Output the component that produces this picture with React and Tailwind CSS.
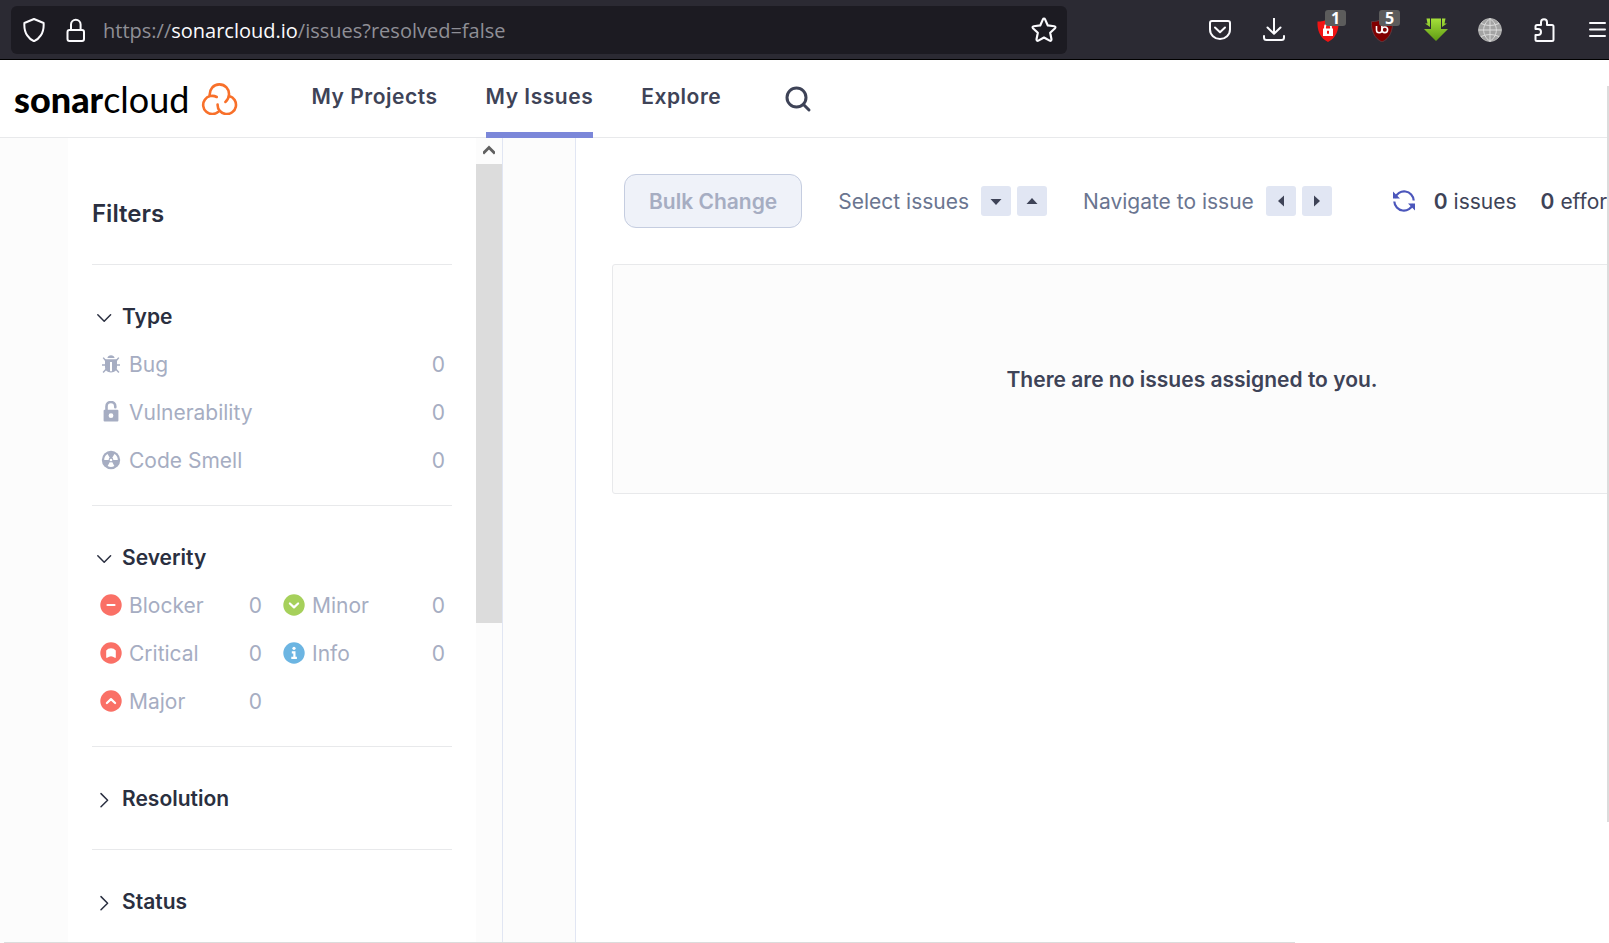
import React from "react";

const facets = {
  severity: [
    ["Blocker", "blocker"], ["Minor", "minor"],
    ["Critical", "critical"], ["Info", "info"],
    ["Major", "major"],
  ],
  type: [["Bug", "bug"], ["Vulnerability", "lock"], ["Code Smell", "smell"]],
};

function FacetIcon({ kind }) {
  const shapes = {
    bug: (
      <g>
        <path fill="#a6adc2" d="M7.4 5a3.7 3.7 0 0 1 7.2 0z" />
        <path fill="#a6adc2" fillRule="evenodd" d="M5 6.200h12v7.600c0 3.600-2.200 5.600-6 5.600s-6-2-6-5.600zM10 9v9.200h2V9z" />
        <path stroke="#a6adc2" strokeWidth="1.500" fill="none" d="M5.800 7.800L3.200 4.600M16.200 7.800l2.600-3.200M5.800 12H2M16.200 12H20M6.300 16l-3.200 3.400M15.700 16l3.200 3.400" />
      </g>
    ),
    lock: (
      <g>
        <path stroke="#a6adc2" strokeWidth="2.600" strokeLinecap="round" fill="none" d="M6.500 10V5.400a4.400 4.400 0 0 1 8.800 0v.8" />
        <path fill="#a6adc2" fillRule="evenodd" d="M4.600 8.800h12.800a1 1 0 0 1 1 1v9.600a1 1 0 0 1-1 1H4.600a1 1 0 0 1-1-1V9.800a1 1 0 0 1 1-1zM11 12.300a2.400 2.400 0 1 0 0 4.800 2.400 2.400 0 0 0 0-4.800z" />
      </g>
    ),
    smell: (
      <g>
        <circle cx="11" cy="11" r="9.200" fill="#a6adc2" />
        <path fill="#fff" d="M11 11L4.200 11a6.800 6.800 0 0 1 3.400-5.900zM11 11l3.400-5.900a6.800 6.800 0 0 1 3.400 5.900zM11 11l3.400 5.900a6.800 6.800 0 0 1-6.800 0z" />
        <circle cx="11" cy="11" r="2.400" fill="#a6adc2" />
        <circle cx="11" cy="11" r="1.300" fill="#fff" />
      </g>
    ),
    blocker: (
      <g>
        <circle cx="11" cy="11" r="10.7" fill="#fa7066" />
        <path stroke="#fff" strokeWidth="2.2" strokeLinecap="round" d="M7.5 11h7" />
      </g>
    ),
    critical: (
      <g>
        <circle cx="11" cy="11" r="10.7" fill="#fa7066" />
        <path fill="#fff" d="M6.200 8.600Q8 6.300 11 6.300t4.800 2.300v6.600c0 .6-.5.9-1 .6Q13 14.300 11 14.300t-3.800 1.500c-.5.3-1 0-1-.6z" />
      </g>
    ),
    major: (
      <g>
        <circle cx="11" cy="11" r="10.7" fill="#fa7066" />
        <path stroke="#fff" strokeWidth="2.2" strokeLinecap="round" strokeLinejoin="round" fill="none" d="M6.900 13L11 9.100 15.100 13" />
      </g>
    ),
    minor: (
      <g>
        <circle cx="11" cy="11" r="10.7" fill="#a6d05b" />
        <path stroke="#fff" strokeWidth="2.2" strokeLinecap="round" strokeLinejoin="round" fill="none" d="M6.900 9.500L11 13.400 15.100 9.500" />
      </g>
    ),
    info: (
      <g>
        <circle cx="11" cy="11" r="10.7" fill="#6cb5e2" />
        <circle cx="11" cy="6.300" r="1.600" fill="#fff" />
        <path stroke="#fff" strokeWidth="2.2" fill="none" d="M8.800 10.300h2.600v5.200M8.300 15.800h5.600" />
      </g>
    ),
  };
  return <svg viewBox="0 0 22 22" className="size-[22px] shrink-0" aria-hidden="true">{shapes[kind]}</svg>;
}

function Facet({ title, items, columns }) {
  const open = Boolean(items);
  return (
    <section className={"border-t border-[#e8e9eb] pt-9 " + (open ? "pb-6" : "pb-9")}>
      <button type="button" aria-expanded={open} className="flex h-[30px] items-center gap-[10px] pl-1 pt-[2px] text-[21px] font-semibold text-[#2a2f40]">
        <svg viewBox="0 0 16 16" className="mt-[2px] h-4 w-4" fill="none" stroke="currentColor" strokeWidth="1.5" strokeLinecap="round" strokeLinejoin="round" aria-hidden="true">
          {open ? <path d="M1.800 4.800L8.200 11.200 14.600 4.800" /> : <path d="M5 1.600L11.600 8.200 5 14.800" />}
        </svg>
        <span>{title}</span>
      </button>
      {open && (
        <div className={"mt-3 grid gap-[6px] " + (columns === 2 ? "grid-cols-2" : "grid-cols-1")}>
          {items.map(([label, kind]) => (
            <button key={label} type="button" disabled className="flex h-[42px] items-center gap-[7px] pl-2 pr-[7px] text-[21px] text-[#a6adc2]">
              <FacetIcon kind={kind} />
              <span className="flex-1 pt-[2px] text-left">{label}</span>
              <span className="pt-[2px]">0</span>
            </button>
          ))}
        </div>
      )}
    </section>
  );
}

function ToolButton({ label, children }) {
  return (
    <button type="button" aria-label={label} className="relative flex h-6 w-6 shrink-0 items-center justify-center">
      {children}
    </button>
  );
}

function Badge({ children }) {
  return (
    <span className="absolute -top-2 left-[9px] flex h-4 w-[21px] items-center justify-center rounded-[3px] bg-[#5c5c5c] font-['Open_Sans',sans-serif] text-[16px] font-bold leading-4 text-white">
      {children}
    </span>
  );
}

function BrowserBar() {
  const line = { fill: "none", stroke: "#fbfbfe", strokeWidth: 2, strokeLinecap: "round", strokeLinejoin: "round" };
  return (
    <div className="flex h-[60px] items-center border-b border-black bg-[#2b2a33] pl-[11px] pr-[3px]">
      <div className="flex h-12 w-[1056px] shrink-0 items-center rounded-md bg-[#1c1b22] pl-[11px] pr-[10px]">
        <svg viewBox="0 0 24 24" className="size-6" {...line} aria-hidden="true">
          <path d="M12 1l9.600 4c.3 4.600-.4 9-2.800 12.400-1.600 2.400-3.800 4.600-6.800 5.800-3-1.200-5.200-3.400-6.800-5.800C2.800 14 2.100 9.600 2.400 5z" />
        </svg>
        <svg viewBox="0 0 24 24" className="ml-[18px] size-6" {...line} aria-hidden="true">
          <rect x="3.500" y="12" width="16.500" height="11" rx="2" />
          <path d="M7 12V6.500a4.800 4.800 0 0 1 9.600 0V12" />
        </svg>
        <div className="ml-[15px] flex-1 pt-[2px] font-['Open_Sans',sans-serif] text-[20px] text-[#8f8f96]">
          https://<span className="text-[#fbfbfe]">sonarcloud.io</span>/issues?resolved=false
        </div>
        <button type="button" aria-label="Bookmark this page">
          <svg viewBox="0 0 24 24" className="size-[26px]" {...line} aria-hidden="true">
            <path d="M11 2.200c.4-.9 1.600-.9 2 0l2.500 5.600 6 .7c1 .1 1.400 1.200.7 1.900L17.700 14.600l1.200 6c.2 1-.8 1.700-1.700 1.200L12 18.900l-5.200 2.900c-.9.500-1.900-.2-1.700-1.200l1.200-6L1.800 10.400c-.7-.7-.3-1.800.7-1.900l6-.7z" />
          </svg>
        </button>
      </div>
      <div className="ml-auto flex shrink-0 items-center gap-[30px]">
        <ToolButton label="Save to Pocket">
          <svg viewBox="0 0 24 24" className="size-6" {...line}>
            <path d="M4 3h16a2 2 0 0 1 2 2v6.500a10 9.500 0 0 1-20 0V5a2 2 0 0 1 2-2zM7 9.500l5 4.700 5-4.700" />
          </svg>
        </ToolButton>
        <ToolButton label="Downloads">
          <svg viewBox="0 0 24 24" className="size-6" {...line}>
            <path d="M12 .500v15M5.500 9.500l6.500 6.300L18.500 9.500M2 18v1.500A2.500 2.500 0 0 0 4.500 22h15a2.500 2.500 0 0 0 2.500-2.500V18" />
          </svg>
        </ToolButton>
        <ToolButton label="Tracker blocker">
          <svg viewBox="0 0 24 24" className="size-6">
            <path fill="#f01414" d="M12 1c3 2 6.500 2.600 10.500 2.600C23 12 20 20.500 12 24 4 20.500 1 12 1.500 3.600 5.500 3.600 9 3 12 1z" />
            <path fill="#fff" fillRule="evenodd" d="M7 10.500h10V18H7zM11 12.800v3h2v-3z" />
            <path stroke="#fff" strokeWidth="1.800" fill="none" d="M9 11V9a3 3 0 0 1 6 0v2" />
          </svg>
          <Badge>1</Badge>
        </ToolButton>
        <ToolButton label="uBlock">
          <svg viewBox="0 0 24 24" className="size-6">
            <path fill="#800000" stroke="#5e3a40" d="M12 1c3 2 6.500 2.600 10.500 2.600C23 12 20 20.500 12 24 4 20.500 1 12 1.500 3.600 5.500 3.600 9 3 12 1z" />
            <path stroke="#fff" strokeWidth="1.600" fill="none" d="M6.500 8v4a2.700 2.700 0 0 0 5.400 0V8" />
            <circle cx="14.800" cy="11.800" r="2.800" stroke="#fff" strokeWidth="1.600" fill="none" />
          </svg>
          <Badge>5</Badge>
        </ToolButton>
        <ToolButton label="Download helper">
          <svg viewBox="0 0 24 24" className="size-6">
            <defs>
              <linearGradient id="arrow" x1="0" y1="0" x2="0" y2="1">
                <stop offset="0" stopColor="#a5e03a" />
                <stop offset="1" stopColor="#5f9a14" />
              </linearGradient>
            </defs>
            <path fill="url(#arrow)" d="M7 .5h10v10.500h7L12 23 0 11h7zM2.500.5H6v8.500L1 5.500h2.500zM21.500.5H18v8.500l5-3.500h-2.500z" />
          </svg>
        </ToolButton>
        <ToolButton label="Web">
          <svg viewBox="0 0 24 24" className="size-6" fill="none" stroke="#dcdcdc">
            <circle cx="12" cy="12" r="11.400" fill="#a3a3a3" stroke="#b4b4b4" />
            <path d="M12 .6v22.800M.6 12h22.800M3 5.500q9 4 18 0M3 18.500q9-4 18 0M12 .6C3.500 7 3.500 17 12 23.400M12 .6c8.500 6.400 8.500 16.400 0 22.800" />
          </svg>
        </ToolButton>
        <ToolButton label="Extensions">
          <svg viewBox="0 0 24 24" className="size-6" {...line}>
            <path d="M3.500 11V8.500A1.500 1.500 0 0 1 5 7h4V4.300a3 3 0 0 1 6 0V7h5a1.500 1.500 0 0 1 1.500 1.500v13A1.500 1.500 0 0 1 20 23H5a1.500 1.500 0 0 1-1.500-1.500V17H6a3 3 0 0 0 0-6z" />
          </svg>
        </ToolButton>
        <button type="button" aria-label="Menu" className="h-6 w-5">
          <svg viewBox="0 0 20 24" className="h-6 w-5" {...line}>
            <path d="M4 5h15M4 11.500h15M4 18h15" />
          </svg>
        </button>
      </div>
    </div>
  );
}

function Header() {
  const link = "flex h-full items-center border-b-6 border-transparent pt-[2px]";
  return (
    <header className="flex h-[78px] items-stretch border-b border-[#e8e9eb] bg-white pl-[14px]">
      <a href="#home" className="flex items-center text-black" aria-label="sonarcloud">
        <span className="font-[Lato,sans-serif] text-[36px] leading-none"><b className="font-black">sonar</b>cloud</span>
        <svg viewBox="0 0 37 32" className="ml-3 h-8 w-[37px]" fill="none" stroke="#f8702a" strokeWidth="2.600" strokeLinecap="round" aria-hidden="true">
          <path d="M15.700 14A9.100 9.100 0 1 0 17.500 28.600M8.600 12.600C8.300 6 12.500 1.400 18.300 1.400S28.300 6 28 11.500c-.2 3.200-1.200 5.500-3.600 7.400M28.300 13A9.200 9.200 0 1 1 16.600 21.500" />
        </svg>
      </a>
      <nav className="-mb-px ml-[73px] flex gap-12 text-[21px] font-semibold tracking-wide text-[#3e4357]">
        <a href="#projects" className={link}>My Projects</a>
        <a href="#issues" aria-current="page" className="flex h-full items-center border-b-6 border-[#7b87d9] pt-[2px]">My Issues</a>
        <a href="#explore" className={link}>Explore</a>
      </nav>
      <button type="button" aria-label="Search" className="ml-[63px] text-[#3e4357]">
        <svg viewBox="0 0 28 28" className="size-7" fill="none" stroke="currentColor" strokeWidth="3" strokeLinecap="round">
          <circle cx="12.500" cy="12.500" r="9.500" />
          <path d="M19.500 19.500L25 25" />
        </svg>
      </button>
    </header>
  );
}

function ArrowButton({ label, d }) {
  return (
    <button type="button" aria-label={label} className="flex size-[30px] items-center justify-center rounded-[3px] bg-[#e1e6f3]">
      <svg viewBox="0 0 12 12" className="size-3" fill="#3e4357"><path d={d} /></svg>
    </button>
  );
}

export default function App() {
  return (
    <div className="relative flex h-screen flex-col overflow-hidden bg-white font-[Inter,sans-serif]">
      <BrowserBar />
      <Header />
      <div className="flex min-h-0 flex-1">
        <div className="flex w-[576px] shrink-0 border-r border-[#e1e6f3] bg-[#fcfcfc] pl-[68px]">
          <aside className="w-[408px] overflow-hidden bg-white px-6">
            <h2 className="flex h-[126px] items-center pt-[26px] text-[24px] font-semibold text-[#2a2f40]">Filters</h2>
            <Facet title="Type" items={facets.type} columns={1} />
            <Facet title="Severity" items={facets.severity} columns={2} />
            <Facet title="Resolution" />
            <Facet title="Status" />
          </aside>
          <div className="flex w-[27px] flex-col border-r border-[#e1e6f3]">
            <div className="flex h-[26px] items-center justify-center pb-[2px]">
              <svg viewBox="0 0 12 12" className="size-3" fill="none" stroke="#606060" strokeWidth="3"><path d="M0 9.500L6 3.500 12 9.500" /></svg>
            </div>
            <div className="h-[459px] bg-[#dcdcdc]" />
          </div>
        </div>
        <main className="mr-[2px] min-w-0 flex-1 overflow-hidden pl-9 pt-9">
          <div className="w-[1160px]">
            <div className="flex h-[54px] items-center whitespace-nowrap pl-3 text-[21px] text-[#6a7590]">
              <button type="button" disabled className="h-[54px] rounded-xl border border-[#c5cde0] bg-[#eff2f9] px-6 pt-[2px] font-semibold text-[#a6adc2]">Bulk Change</button>
              <span className="ml-9 mr-3 pt-[2px]">Select issues</span>
              <div className="flex gap-[6px]">
                <ArrowButton label="Next" d="M.5 4h11L6 10z" />
                <ArrowButton label="Previous" d="M.5 9h11L6 3z" />
              </div>
              <span className="ml-9 mr-3 pt-[2px]">Navigate to issue</span>
              <div className="flex gap-[6px]">
                <ArrowButton label="Back" d="M9 .5v11L3 6z" />
                <ArrowButton label="Forward" d="M3 .5v11L9 6z" />
              </div>
              <button type="button" aria-label="Reload" className="ml-[60px]">
                <svg viewBox="0 0 24 24" className="size-6" fill="none" stroke="#4b56bb" strokeWidth="2.200">
                  <path d="M3 9A9.600 9.600 0 0 1 21.700 11.500M21 15A9.600 9.600 0 0 1 2.300 12.500" />
                  <path fill="#4b56bb" stroke="none" d="M1 2.500V9.500H8zM23 21.500V14.500H16z" />
                </svg>
              </button>
              <span className="ml-[18px] pt-[2px] text-[#3e4357]"><b className="font-semibold">0</b> issues</span>
              <span className="ml-6 pt-[2px] text-[#3e4357]"><b className="font-semibold">0</b> effort</span>
            </div>
            <div className="mt-9 flex h-[230px] items-center justify-center rounded-[3px] border border-[#e8e9eb] bg-[#fcfcfc] pt-[2px] text-[21px] font-semibold text-[#3e4357]">
              There are no issues assigned to you.
            </div>
          </div>
        </main>
      </div>
      <div className="absolute right-0 top-[86px] h-[736px] w-[2px] bg-[#dcdcdc]" />
      <div className="absolute bottom-0 left-1 right-[314px] h-px bg-[#dcdcdc]" />
    </div>
  );
}
